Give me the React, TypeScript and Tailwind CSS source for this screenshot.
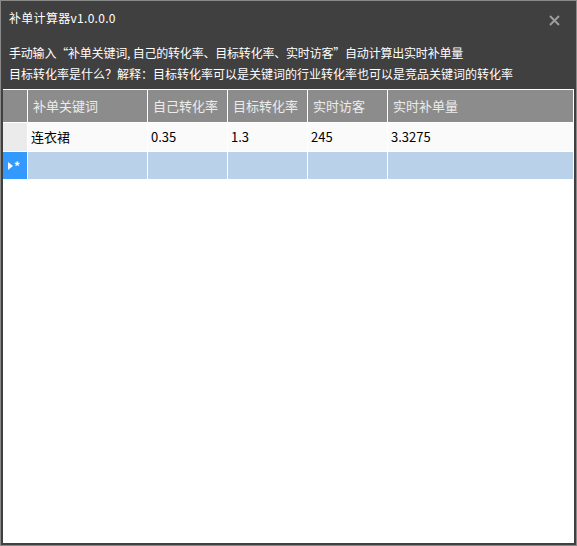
export default function App() {
  const cols = [
    { title: '补单关键词', value: '连衣裙' },
    { title: '自己转化率', value: '0.35' },
    { title: '目标转化率', value: '1.3' },
    { title: '实时访客', value: '245' },
    { title: '实时补单量', value: '3.3275' },
  ];
  const font = { fontFamily: '"Microsoft YaHei", "Noto Sans CJK SC", sans-serif' };

  return (
    <div className="w-[577px] h-[546px] bg-[#404040] border border-[#8a8a8a] flex flex-col px-[2px] pb-[2px]" style={font}>
      {/* 标题栏 */}
      <div className="h-[88px] flex flex-col text-white text-[12px] leading-none">
        <div className="flex items-center justify-between h-[33px] pl-[6px] pr-[14px]">
          <span className="tracking-[0.3px]">补单计算器v1.0.0.0</span>
          <svg width="11" height="11" viewBox="0 0 11 11" className="mt-[5px]">
            <path d="M1 1 L10 10 M10 1 L1 10" stroke="#9c9c9c" strokeWidth="2" />
          </svg>
        </div>
        <div className="pl-[6px] pt-[13px] flex flex-col gap-[9px]">
          <p className="tracking-[-0.2px]">手动输入“补单关键词, 自己的转化率、目标转化率、实时访客”自动计算出实时补单量</p>
          <p>目标转化率是什么？解释：目标转化率可以是关键词的行业转化率也可以是竞品关键词的转化率</p>
        </div>
      </div>

      {/* 表格 */}
      <div className="flex-1 bg-white pt-px">
        <div className="grid grid-cols-[24px_119px_79px_79px_79px_1fr] gap-px bg-white pr-px">
          <div className="h-[32px] bg-[#8c8c8c]" />
          {cols.map((c) => (
            <div key={c.title} className="h-[32px] bg-[#8c8c8c] text-[#ececec] text-[13px] flex items-center pl-[5px]">
              {c.title}
            </div>
          ))}

          <div className="h-[28px] bg-[#ebebeb]" />
          {cols.map((c) => (
            <div key={c.title} className="h-[28px] bg-[#fafafa] text-black text-[13px] flex items-center pl-[3px]">
              {c.value}
            </div>
          ))}

          <div className="h-[27px] bg-[#3399ff] flex items-center pl-[5px] gap-[1px] text-white">
            <svg width="5" height="8" viewBox="0 0 5 8">
              <path d="M0 0 L5 4 L0 8 Z" fill="white" />
            </svg>
            <span className="text-[12px] leading-none font-bold">*</span>
          </div>
          {cols.map((c) => (
            <div key={c.title} className="h-[27px] bg-[#bad1ea]" />
          ))}
        </div>
      </div>
    </div>
  );
}
